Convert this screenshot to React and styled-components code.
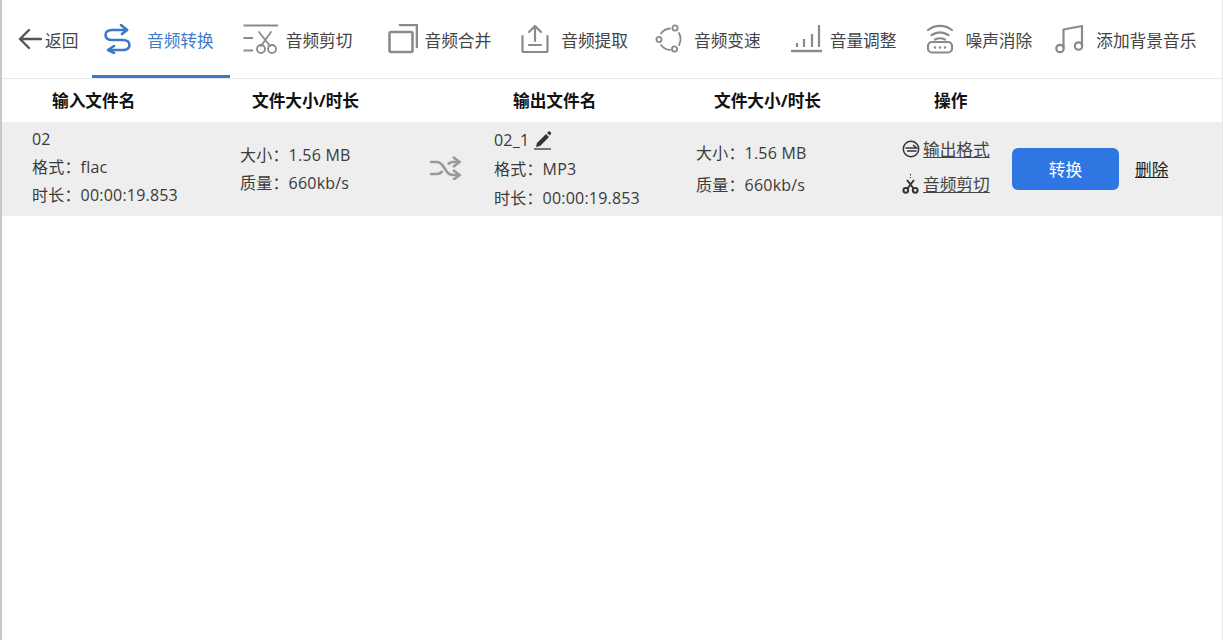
import React from "react";
import styled, { createGlobalStyle } from "styled-components";

const Global = createGlobalStyle`
  html, body { margin: 0; padding: 0; background: #fff; }
  body { font-family: "Open Sans", "Noto Sans CJK SC", sans-serif; color: #333; }
`;
const Page = styled.div`
  width: 1223px; height: 640px; box-sizing: border-box; overflow: hidden;
  border-left: 2px solid #c9c9c9; border-right: 1px solid #e4e4e4;
  background: #fff;
`;
const Nav = styled.nav`
  display: flex; height: 79px; box-sizing: border-box; padding-left: 16px;
  border-bottom: 1px solid #e9e9e9; align-items: stretch;
`;
const BackLink = styled.div`
  display: flex; align-items: center; width: 74px; gap: 3px;
  font-size: 16.7px; color: #444;
  span { margin-top: 1px; }
`;
const Tab = styled.div`
  display: flex; align-items: center; height: 78px; box-sizing: border-box;
  margin-left: ${p => p.$ml}px; gap: ${p => p.$gap}px;
  padding: 0 ${p => (p.$active ? 16 : 0)}px 0 ${p => (p.$active ? 12 : 0)}px;
  font-size: 16.7px; white-space: nowrap;
  color: ${p => (p.$active ? "#3d7cc9" : "#444")};
  border-bottom: ${p => (p.$active ? "3px solid #3a78c8" : "none")};
  svg { display: block; flex: none; margin-top: ${p => (p.$active ? 3 : 0)}px; }
  span { margin-top: ${p => (p.$active ? 4 : 1)}px; }
`;
const TableHead = styled.div`
  display: grid; grid-template-columns: 200px 261px 201px 220px 1fr;
  height: 43px; box-sizing: border-box; padding: 0 0 2px 50px; align-items: center;
  font-size: 16.7px; font-weight: 700; color: #111;
`;
const Row = styled.div`
  display: flex; height: 94px; background: #eeeeee; align-items: center;
  font-size: 16px; color: #3a3a3a;
`;
const Cell = styled.div`
  width: ${p => p.$w}px; margin-left: ${p => p.$ml || 0}px; flex: none;
  padding-bottom: ${p => p.$pb || 0}px;
  line-height: ${p => p.$lh || 28}px; letter-spacing: .2px; white-space: nowrap;
`;
const FileName = styled.div`
  display: flex; align-items: center; gap: 5px;
`;
const ArrowCell = styled.div`
  width: 64px; flex: none; padding-bottom: 3px;
  svg { display: block; }
`;
const OpLinks = styled.div`
  width: 110px; flex: none; display: flex; flex-direction: column; gap: 9px;
  padding-bottom: 6px;
`;
const OpLink = styled.div`
  display: flex; align-items: center; gap: ${p => p.$gap}px; height: 26px;
  color: #444; letter-spacing: 0;
  span { text-decoration: underline; font-size: 16.7px; }
`;
const ConvertButton = styled.button`
  width: 107px; height: 42px; border: 0; border-radius: 6px; background: #2f76e3;
  color: #fff; font: 16.7px "Open Sans", "Noto Sans CJK SC", sans-serif; padding: 0;
`;
const DeleteLink = styled.a`
  margin-left: 16px; font-size: 16.7px; color: #222; text-decoration: underline;
`;

const G = { fill: "none", stroke: "#8a8a8a", strokeWidth: 2.2, strokeLinecap: "round", strokeLinejoin: "round" };

const BackIcon = () => (
  <svg width="24" height="24" viewBox="0 0 24 24" fill="none" stroke="#555" strokeWidth="2.4" strokeLinecap="round" strokeLinejoin="round">
    <path d="M23 12H2M11 3l-9 9 9 9" />
  </svg>
);
const ConvertIcon = () => (
  <svg width="27" height="30" viewBox="0 0 27 30" fill="none" stroke="#3a78c8" strokeWidth="2.6" strokeLinecap="round" strokeLinejoin="round">
    <path d="M23 6H8C4 6 1.500 8 1.500 11S4 16 8 16h11c4 0 6.500 2 6.500 5s-2.500 5-6.500 5H5" />
    <path d="M17 1l6 5-5 4M10 22l-6 4 6 3" />
  </svg>
);
const CutIcon = () => (
  <svg width="35" height="30" viewBox="0 0 35 30" {...G}>
    <path d="M0.500 1.500H35" strokeLinecap="butt" />
    <path d="M0.500 14H10M0.500 26.500H10" strokeLinecap="butt" />
    <path d="M28 8L18 22M16 8l11 14" strokeWidth="1.800" />
    <circle cx="18" cy="25" r="4" strokeWidth="1.800" />
    <circle cx="29" cy="25" r="4" strokeWidth="1.800" />
  </svg>
);
const MergeIcon = () => (
  <svg width="30" height="30" viewBox="0 0 30 30" {...G} strokeWidth="2.600">
    <rect x="1.500" y="8" width="23" height="20" rx="1.500" />
    <path d="M12 1h17v22" />
  </svg>
);
const ExtractIcon = () => (
  <svg width="28" height="30" viewBox="0 0 28 30" {...G}>
    <path d="M1.500 12v14.500c0 1 .5 1.500 1.500 1.500h22c1 0 1.500-.5 1.500-1.500V12" />
    <path d="M14 2v15M8 8l6-6 6 6M8 21h12" />
  </svg>
);
const SpeedIcon = () => (
  <svg width="27" height="30" viewBox="0 0 27 30" {...G} strokeWidth="1.800">
    <path d="M15 4.500A12 12 0 0 0 6 9.500M6 21a13 13 0 0 0 9 5M24 9a13 13 0 0 1 0 12" />
    <circle cx="20" cy="4" r="2.600" />
    <circle cx="4" cy="15.500" r="2.600" />
    <circle cx="19.500" cy="25" r="2.600" />
  </svg>
);
const VolumeIcon = () => (
  <svg width="33" height="30" viewBox="0 0 33 30" {...G}>
    <path d="M1 27h31" strokeWidth="2.400" strokeLinecap="butt" />
    <path d="M7 19v4M14 15v8M22 10v13M29 1v22" strokeLinecap="butt" />
  </svg>
);
const NoiseIcon = () => (
  <svg width="28" height="30" viewBox="0 0 28 30" {...G}>
    <path d="M2 6c7-5.500 17-5.500 24 0M5.500 11c5.500-3.500 11.500-3.500 17 0M9 15.500c3-1.500 7-1.500 10 0" />
    <rect x="2" y="18" width="24" height="10.500" rx="4" />
    <path d="M9 23.500h.1M14 23.500h.1M19 23.500h.1" strokeWidth="2.400" />
  </svg>
);
const MusicIcon = () => (
  <svg width="29" height="30" viewBox="0 0 29 30" {...G}>
    <path d="M8.500 24V5.500L27 2v20" />
    <circle cx="5" cy="24.500" r="3.700" />
    <circle cx="23.500" cy="22" r="3.700" />
  </svg>
);
const ShuffleIcon = () => (
  <svg width="32" height="24" viewBox="0 0 32 24" fill="none" stroke="#9a9a9a" strokeWidth="2.700" strokeLinejoin="miter">
    <path d="M0 6h7c3 0 4 1 6 4l4 6c1.500 2 3 3 6 3h6" />
    <path d="M0 18h7c3 0 4-1 5.500-3M18 8.500C19.500 6.500 21 6 23 6h6" />
    <path d="M23 1l6.500 5-6.500 5M23 14l6.500 5-6.500 5" />
  </svg>
);
const PencilIcon = () => (
  <svg width="18" height="20" viewBox="0 0 18 20">
    <path d="M3 13l9-9 3 3-9 9-4 1zM13 3l1.500-1.500a1 1 0 0 1 1.400 0l1 1a1 1 0 0 1 0 1.400L16 5.500z" fill="#333" />
    <path d="M0 19h17" stroke="#333" strokeWidth="1.300" />
  </svg>
);
const FormatIcon = () => (
  <svg width="18" height="18" viewBox="0 0 18 18" fill="none" stroke="#333" strokeWidth="1.500">
    <circle cx="9" cy="9" r="7.700" />
    <path d="M3.500 8h11L11 5M14.500 11H5" />
  </svg>
);
const ScissorsIcon = () => (
  <svg width="17" height="20" viewBox="0 0 17 20" fill="none" stroke="#333" strokeWidth="2">
    <path d="M12 6L5 15M5 6l7 9" />
    <path d="M8.500 0v1.500M8.500 3v1" strokeWidth="1" />
    <circle cx="3.800" cy="16.300" r="2.400" />
    <circle cx="13.200" cy="16.300" r="2.400" />
  </svg>
);

const tabs = [
  { label: "音频转换", Icon: ConvertIcon, ml: 0, gap: 16, active: true },
  { label: "音频剪切", Icon: CutIcon, ml: 13, gap: 8 },
  { label: "音频合并", Icon: MergeIcon, ml: 35, gap: 7 },
  { label: "音频提取", Icon: ExtractIcon, ml: 30, gap: 12 },
  { label: "音频变速", Icon: SpeedIcon, ml: 27, gap: 12 },
  { label: "音量调整", Icon: VolumeIcon, ml: 29, gap: 7 },
  { label: "噪声消除", Icon: NoiseIcon, ml: 29, gap: 12 },
  { label: "添加背景音乐", Icon: MusicIcon, ml: 23, gap: 12 },
];

export default function App() {
  return (
    <Page>
      <Global />
      <Nav>
        <BackLink><BackIcon /><span>返回</span></BackLink>
        {tabs.map(({ label, Icon, ml, gap, active }) => (
          <Tab key={label} $ml={ml} $gap={gap} $active={active}>
            <Icon /><span>{label}</span>
          </Tab>
        ))}
      </Nav>
      <TableHead>
        <div>输入文件名</div>
        <div>文件大小/时长</div>
        <div>输出文件名</div>
        <div>文件大小/时长</div>
        <div>操作</div>
      </TableHead>
      <Row>
        <Cell $w={208} $ml={30} $pb={4}>
          <div>02</div>
          <div>格式：flac</div>
          <div>时长：00:00:19.853</div>
        </Cell>
        <Cell $w={190}>
          <div>大小：1.56 MB</div>
          <div>质量：660kb/s</div>
        </Cell>
        <ArrowCell><ShuffleIcon /></ArrowCell>
        <Cell $w={202} $lh={29}>
          <FileName>02_1<PencilIcon /></FileName>
          <div>格式：MP3</div>
          <div>时长：00:00:19.853</div>
        </Cell>
        <Cell $w={206} $lh={32}>
          <div>大小：1.56 MB</div>
          <div>质量：660kb/s</div>
        </Cell>
        <OpLinks>
          <OpLink $gap={3}><FormatIcon /><span>输出格式</span></OpLink>
          <OpLink $gap={4}><ScissorsIcon /><span>音频剪切</span></OpLink>
        </OpLinks>
        <ConvertButton>转换</ConvertButton>
        <DeleteLink>删除</DeleteLink>
      </Row>
    </Page>
  );
}
